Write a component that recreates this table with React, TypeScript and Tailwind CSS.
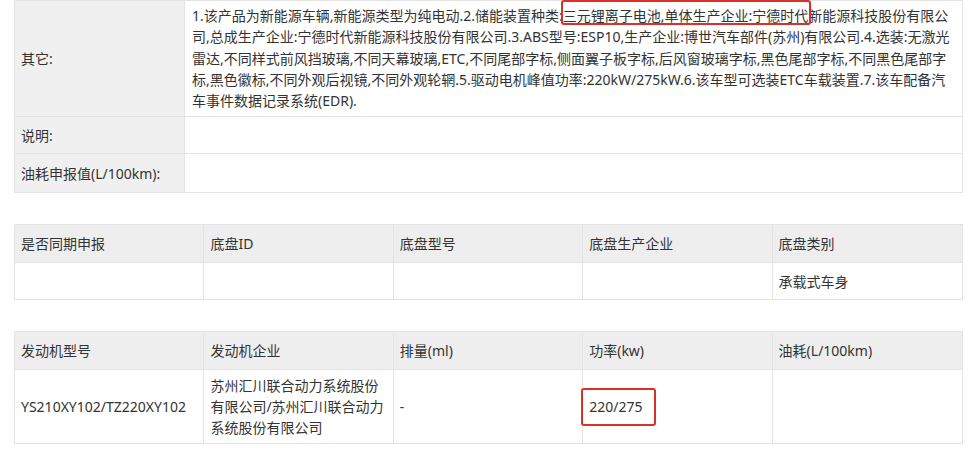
import React from 'react'

const font = "font-['Noto_Sans','Noto_Sans_CJK_SC',sans-serif]"

const otherLines = [
  null,
  '司,总成生产企业:宁德时代新能源科技股份有限公司.3.ABS型号:ESP10,生产企业:博世汽车部件(苏州)有限公司.4.选装:无激光',
  '雷达,不同样式前风挡玻璃,不同天幕玻璃,ETC,不同尾部字标,侧面翼子板字标,后风窗玻璃字标,黑色尾部字标,不同黑色尾部字',
  '标,黑色徽标,不同外观后视镜,不同外观轮辋.5.驱动电机峰值功率:220kW/275kW.6.该车型可选装ETC车载装置.7.该车配备汽',
  '车事件数据记录系统(EDR).',
]

// red annotation frame drawn over the text
function Marked({ children, box }: { children: React.ReactNode; box: string }) {
  return (
    <span className="relative">
      {children}
      <span className={`absolute border-2 border-[#d9302a] rounded-[3px] ${box}`} />
    </span>
  )
}

function InfoRow({ label, children, h }: { label: string; children?: React.ReactNode; h: string }) {
  return (
    <div className={`flex border-b border-[#e4e4e4] last:border-b-0 ${h}`}>
      <div className="w-[170px] shrink-0 bg-[#f0f0f0] border-r border-[#e4e4e4] px-[6px] flex items-center">
        {label}
      </div>
      <div className="flex-1 px-[7px] py-[4px] leading-[21.3px]">{children}</div>
    </div>
  )
}

function Grid5({ head, row, rowH }: { head: string[]; row: React.ReactNode[]; rowH: string }) {
  return (
    <div className="border border-[#e4e4e4] grid grid-cols-5">
      {head.map((t, i) => (
        <div
          key={t}
          className={`h-[38px] bg-[#eeeeee] px-[6px] flex items-center border-b border-[#e4e4e4] ${i < 4 ? 'border-r' : ''}`}
        >
          {t}
        </div>
      ))}
      {row.map((c, i) => (
        <div
          key={i}
          className={`${rowH} px-[6px] flex items-center leading-[21px] border-[#e4e4e4] ${i < 4 ? 'border-r' : ''}`}
        >
          {c}
        </div>
      ))}
    </div>
  )
}

export default function App() {
  return (
    <div className={`${font} text-[14px] text-[#333333] bg-white min-h-[449px] pl-[14px] pr-[16px]`}>
      {/* 其它 / 说明 / 油耗 */}
      <div className="border border-[#e4e4e4]">
        <InfoRow label="其它:" h="h-[116px]">
          <div className="whitespace-nowrap">
            1.该产品为新能源车辆,新能源类型为纯电动.2.储能装置种类:
            <Marked box="-left-[2px] -right-[3px] -top-[6px] bottom-[0px]">三元锂离子电池,单体生产企业:宁德时代</Marked>
            新能源科技股份有限公
          </div>
          {otherLines.slice(1).map((l) => (
            <div key={l} className="whitespace-nowrap">
              {l}
            </div>
          ))}
        </InfoRow>
        <InfoRow label="说明:" h="h-[37px]" />
        <InfoRow label="油耗申报值(L/100km):" h="h-[38px]" />
      </div>

      <div className="mt-[31px]">
        <Grid5
          head={['是否同期申报', '底盘ID', '底盘型号', '底盘生产企业', '底盘类别']}
          row={['', '', '', '', '承载式车身']}
          rowH="h-[36px]"
        />
      </div>

      <div className="mt-[31px]">
        <Grid5
          head={['发动机型号', '发动机企业', '排量(ml)', '功率(kw)', '油耗(L/100km)']}
          row={[
            'YS210XY102/TZ220XY102',
            '苏州汇川联合动力系统股份有限公司/苏州汇川联合动力系统股份有限公司',
            '-',
            <Marked key="p" box="-left-[8px] -right-[14px] -top-[8px] -bottom-[9px]">220/275</Marked>,
            '',
          ]}
          rowH="h-[73px]"
        />
      </div>
    </div>
  )
}
